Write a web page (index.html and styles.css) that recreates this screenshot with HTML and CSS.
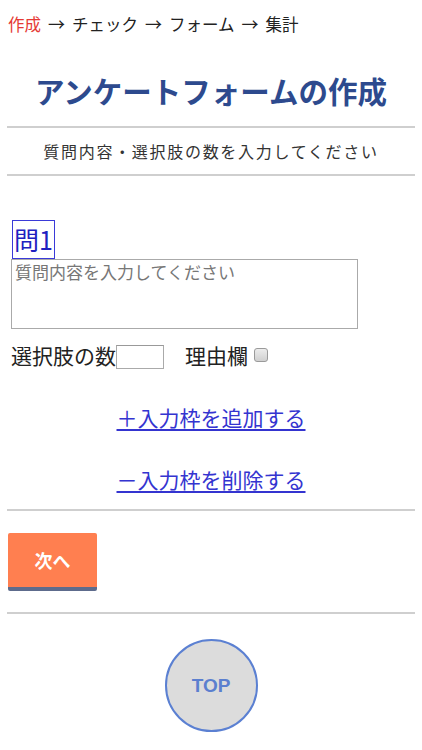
FILE: index.html
```html
<!DOCTYPE html>
<html lang="ja">
<head>
<meta charset="utf-8">
<title>アンケートフォームの作成</title>
<link rel="stylesheet" href="styles.css">
</head>
<body>
<div class="page">
  <nav class="crumbs"><span class="current">作成</span><span class="arrow">→</span>チェック<span class="arrow">→</span>フォーム<span class="arrow">→</span>集計</nav>
  <h1 class="title">アンケートフォームの作成</h1>
  <hr class="rule">
  <p class="lead">質問内容・選択肢の数を入力してください</p>
  <hr class="rule">
  <div class="question">
    <div class="qlabel">問1</div>
    <textarea class="qtext" placeholder="質問内容を入力してください"></textarea>
    <div class="qopts">
      <span class="optlabel">選択肢の数</span><input class="num" type="text">
      <span class="optlabel reason">理由欄</span><input class="check" type="checkbox">
    </div>
  </div>
  <div class="links">
    <a href="#" class="link">＋入力枠を追加する</a>
    <a href="#" class="link">－入力枠を削除する</a>
  </div>
  <hr class="rule">
  <div class="actions"><button class="next" type="button">次へ</button></div>
  <hr class="rule">
  <div class="totop"><a href="#" class="topbtn">TOP</a></div>
</div>
</body>
</html>
```
FILE: styles.css
```css
html, body {
  margin: 0;
  padding: 0;
  background: #fff;
}
body {
  font-family: "Noto Sans CJK JP", "Noto Sans", sans-serif;
  color: #222;
}
.page {
  padding: 0 7px;
}
.crumbs {
  display: flex;
  align-items: center;
  height: 24px;
  margin-top: 12px;
  padding-left: 1px;
  font-size: 16.5px;
  line-height: 24px;
  color: #222;
  white-space: nowrap;
}
.arrow {
  display: block;
  width: 17px;
  margin: 0 7px;
  text-align: center;
  font-size: 17px;
  line-height: 24px;
}
.current {
  color: #e53935;
}
.title {
  margin: 34px 0 0;
  font-size: 29.5px;
  line-height: 40px;
  text-align: center;
  font-weight: bold;
  color: #2d4a8e;
}
.rule {
  margin: 0;
  border: 0;
  height: 2px;
  background: #cfcfcf;
}
.title + .rule {
  margin-top: 16px;
}
.lead {
  margin: 0;
  padding: 11px 0 11px;
  font-size: 16px;
  line-height: 24px;
  letter-spacing: 1.7px;
  text-align: center;
  color: #333;
}
.question {
  margin-top: 44px;
  padding-left: 4px;
}
.qlabel {
  display: inline-block;
  box-sizing: border-box;
  margin-left: 1px;
  height: 39px;
  padding: 0 1px;
  border: 1px solid #3a3ad8;
  font-size: 25px;
  line-height: 37px;
  color: #2020c0;
  vertical-align: top;
}
.qtext {
  display: block;
  box-sizing: border-box;
  width: 347px;
  height: 70px;
  margin: 0;
  padding: 2px 3px;
  border: 1px solid #aaa;
  font-family: "Noto Sans CJK JP", sans-serif;
  font-size: 17px;
  line-height: 20px;
  resize: none;
}
.qtext::placeholder {
  color: #777;
}
.qopts {
  display: flex;
  align-items: center;
  margin-top: 12px;
  height: 28px;
}
.optlabel {
  font-size: 21px;
  line-height: 28px;
  color: #222;
}
.num {
  box-sizing: border-box;
  width: 48px;
  height: 24px;
  margin: 4px 0 0;
  padding: 0;
  border: 1px solid #aaa;
  border-top-color: #999;
}
.reason {
  margin-left: 21px;
}
.check {
  appearance: none;
  box-sizing: border-box;
  width: 14px;
  height: 14px;
  margin: 0 0 0 6px;
  border: 1px solid #9a9a9a;
  border-radius: 3px;
  background: linear-gradient(#ececec, #d0d0d0);
}
.links {
  display: flex;
  flex-direction: column;
  align-items: center;
  gap: 34px;
  margin-top: 34px;
  margin-bottom: 16px;
}
.link {
  font-size: 21px;
  line-height: 28px;
  color: #3434d0;
  text-decoration: underline;
  text-underline-offset: 3px;
}
.actions {
  padding: 22px 1px 21px;
}
.next {
  display: block;
  width: 89px;
  height: 58px;
  border: 0;
  border-bottom: 4px solid #5d6b8c;
  border-radius: 2px;
  background: #ff7f50;
  color: #fff;
  font-family: "Noto Sans CJK JP", sans-serif;
  font-size: 18px;
  font-weight: bold;
  padding: 0;
}
.totop {
  display: flex;
  justify-content: center;
  padding-top: 25px;
}
.topbtn {
  display: flex;
  align-items: center;
  justify-content: center;
  box-sizing: border-box;
  width: 93px;
  height: 93px;
  border: 2px solid #5b80d2;
  border-radius: 50%;
  background: #dcdcdc;
  color: #5b7fcf;
  font-family: "Liberation Sans", Arial, sans-serif;
  font-size: 19px;
  font-weight: bold;
  text-decoration: none;
}
```
